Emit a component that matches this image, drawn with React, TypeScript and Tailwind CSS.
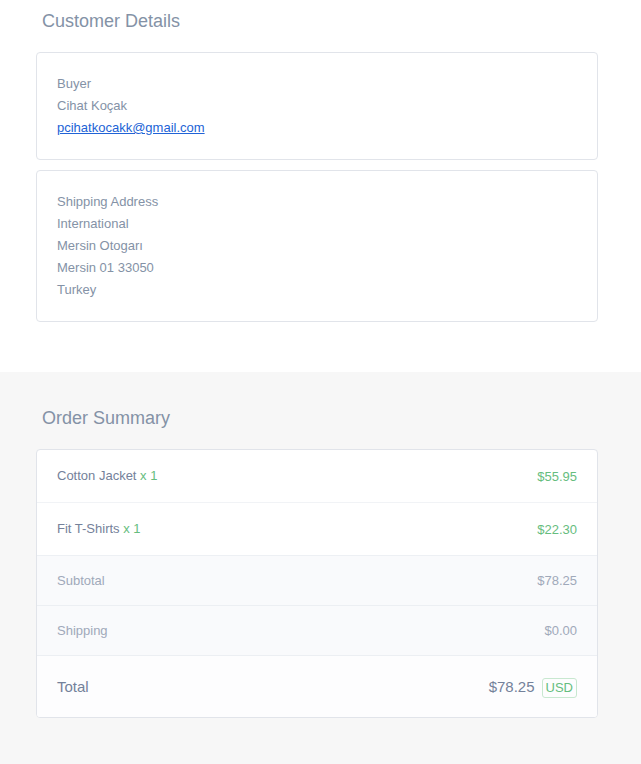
export default function App() {
  return (
    <div className="min-h-[764px] bg-white font-['Liberation_Sans',Arial,sans-serif] text-[#8492a6]">
      <section className="bg-white pb-[50px] pl-9 pr-[43px] pt-[10px]">
        <h2 className="px-1.5 text-[18px] leading-[22px]">Customer Details</h2>
        <div className="mt-5 flex flex-col gap-[10px]">
          <div className="rounded border border-[#e1e4ea] p-5 text-[13px] leading-[22px]">
            <p>Buyer</p>
            <p>Cihat Koçak</p>
            <a href="#" className="text-[#2163d6] underline">pcihatkocakk@gmail.com</a>
          </div>
          <div className="rounded border border-[#e1e4ea] p-5 text-[13px] leading-[22px]">
            <p>Shipping Address</p>
            <p>International</p>
            <p>Mersin Otogarı</p>
            <p>Mersin 01 33050</p>
            <p>Turkey</p>
          </div>
        </div>
      </section>
      <section className="min-h-[392px] bg-[#f7f7f7] pb-[46px] pl-9 pr-[43px] pt-[35px]">
        <h2 className="px-1.5 text-[18px] leading-[22px]">Order Summary</h2>
        <div className="mt-5 overflow-hidden rounded border border-[#e1e4ea] bg-white text-[13px]">
          <div className="flex h-[53px] items-center justify-between border-b border-[#f1f3f6] px-5">
            <span className="text-[#74819a]">
              Cotton Jacket <span className="text-[#66bd7e]">x 1</span>
            </span>
            <span className="mt-[2px] text-[#66bd7e]">$55.95</span>
          </div>
          <div className="flex h-[53px] items-center justify-between border-b border-[#edf0f4] px-5">
            <span className="text-[#74819a]">
              Fit T-Shirts <span className="text-[#66bd7e]">x 1</span>
            </span>
            <span className="mt-[2px] text-[#66bd7e]">$22.30</span>
          </div>
          <div className="flex h-[50px] items-center justify-between border-b border-[#eceff3] bg-[#f9fafc] px-5 text-[#a0a9ba]">
            <span>Subtotal</span>
            <span>$78.25</span>
          </div>
          <div className="flex h-[50px] items-center justify-between border-b border-[#eceff3] bg-[#f9fafc] px-5 text-[#a0a9ba]">
            <span>Shipping</span>
            <span>$0.00</span>
          </div>
          <div className="flex h-[61px] items-center justify-between bg-[#fdfdfe] px-5 pt-[2px]">
            <span className="text-[15px] text-[#74819a]">Total</span>
            <div className="flex items-center gap-[7px]">
              <span className="text-[15px] text-[#74819a]">$78.25</span>
              <span className="rounded-[3px] border border-[#c8e8d0] px-[3px] py-[1px] text-[13px] leading-[16px] text-[#66bd7e]">
                USD
              </span>
            </div>
          </div>
        </div>
      </section>
    </div>
  );
}
